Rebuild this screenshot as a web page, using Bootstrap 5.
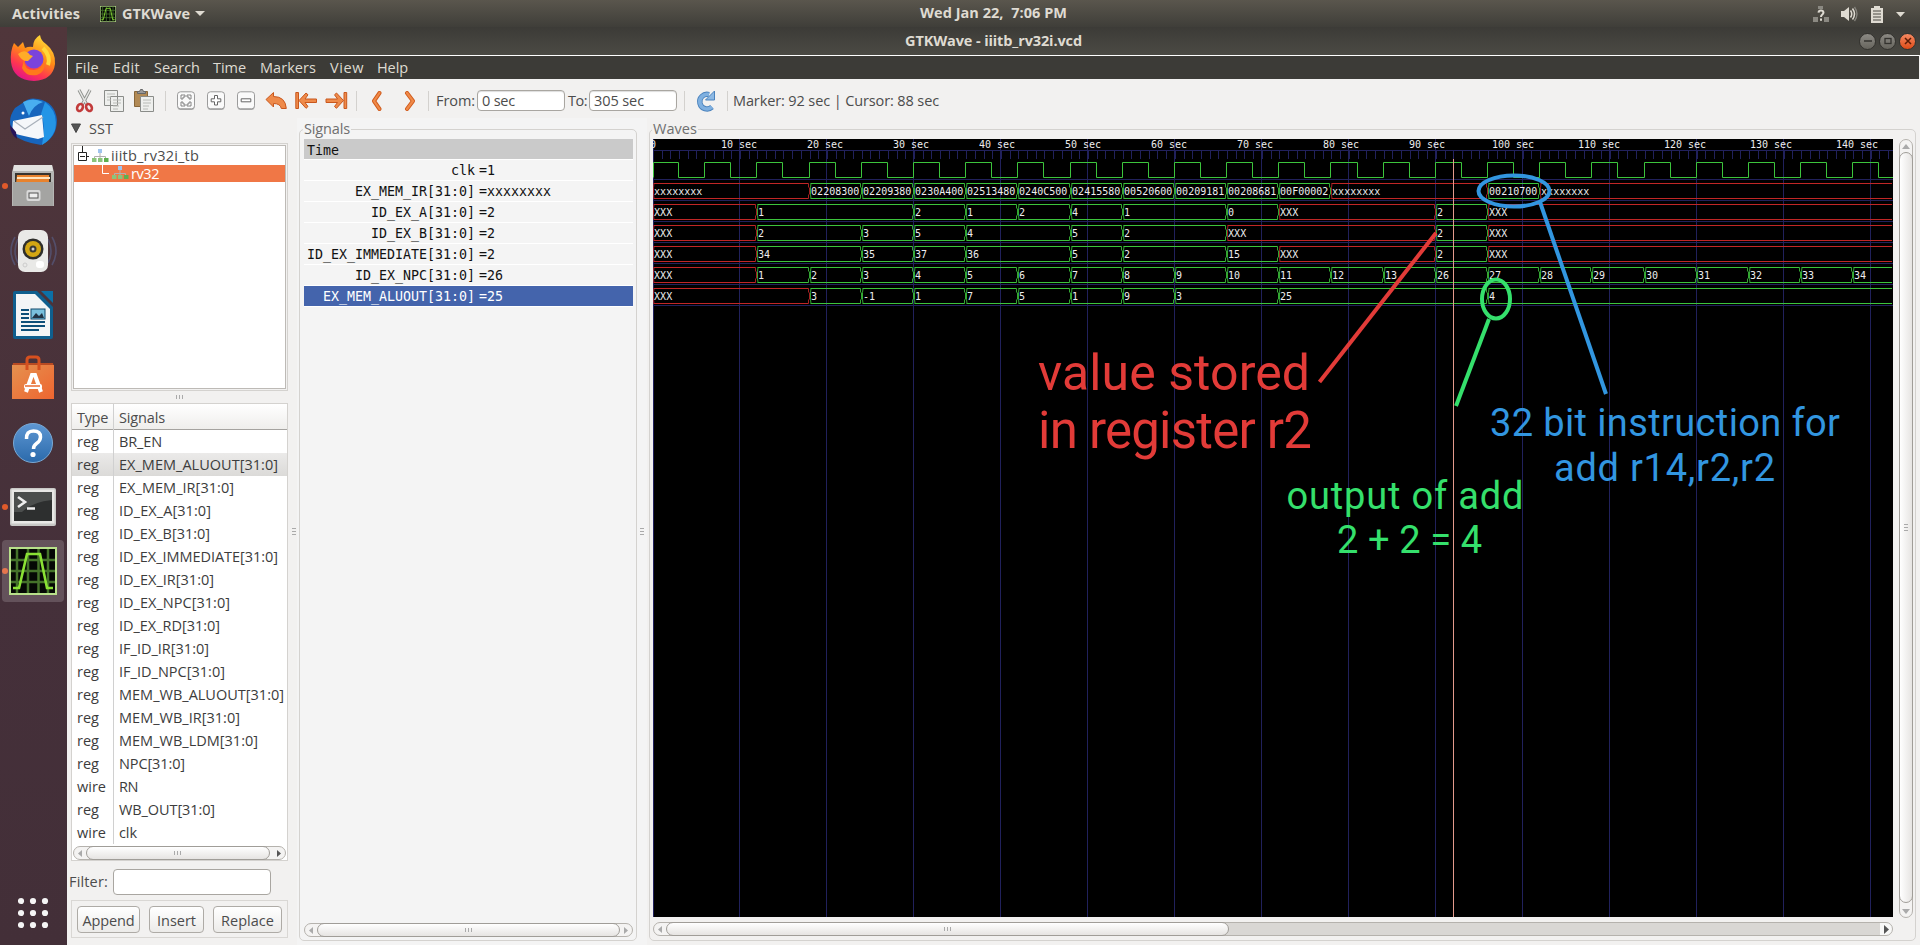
<!DOCTYPE html>
<html lang="en">
<head>
<meta charset="utf-8">
<title>GTKWave - iiitb_rv32i.vcd</title>
<link rel="stylesheet" href="https://cdn.jsdelivr.net/npm/bootstrap@5.3.0/dist/css/bootstrap.min.css">
<style>
body{width:1920px;height:945px;font:14.5px/20px "Open Sans","Noto Sans",sans-serif;color:#4c4c4c;background:#f2f1f0}
svg{display:block;flex:none}
.fit{white-space:pre;display:inline-block}
.topbar{height:27px;background:linear-gradient(#5a564d,#3f3e39);color:#dfdbd2;font-weight:700;padding:0 14px 0 12px}
.clock{left:920px;top:3px}
.dock{width:67px;background:linear-gradient(#50363b,#45303a 60%,#432f38)}
.dock .app{height:64.2px;display:flex;align-items:center;justify-content:center;position:relative;padding-right:1px}
.dock .app:first-child{margin-top:-1px}
.dock .running::before{content:"";position:absolute;left:2px;top:29px;width:6px;height:6px;border-radius:50%;background:#e05a2b}
.dock .active-app::after{content:"";position:absolute;left:2px;top:1px;width:62px;height:62px;border-radius:4px;background:rgba(255,255,255,.17);z-index:0}
.dock .app svg{position:relative;z-index:1}
.titlebar{height:28px;background:linear-gradient(#3c3b37,#4b4a44);border-bottom:0;color:#dfdbd2;font-weight:700}
.wm{width:17px;height:17px;border-radius:50%;background:linear-gradient(#8c8a84,#66645d);border:1px solid #33322e;display:flex;align-items:center;justify-content:center}
.wm.close-btn{background:linear-gradient(#f58a63,#df4b17)}
.menus{height:24px;background:#3c3b37;color:#dfdbd2;border-top:1px solid #fff;margin:0 1px 0 1px;display:grid;grid-template-columns:38px 41px 59px 47px 70px 47px 1fr;padding-left:7px;line-height:24px}
.tools{height:39px;padding:4px 0 0 8px;display:grid;align-items:center;grid-template-columns:29px 30px 31px 12px 30px 30px 28px 30px 30px 31px 15px 33px 24px 8px 41px 91px 21px 95px 11px 32px 6px 1fr}
.tools i{width:1px;height:20px;background:#d3d1ce}
.entry{height:21px;width:88px;background:#fff;border:1px solid #a9a6a1;border-radius:4px;padding-left:4px;line-height:20px;box-shadow:inset 0 1px 1px #ddd}
.left{width:230px;position:relative}
.left>.gripv{position:absolute;left:225px;top:410px}
.sst{height:25px;padding:5px 0 0 4px}
.sst .fit{margin:-4px 0 0 8px}
.tree{margin-left:4px;width:217px;height:248px;border:1px solid #d4d2cf;padding:1px}
.tree>div{border:1px solid #bdbab6;height:100%;background:#fff}
.node{height:19px;line-height:20px}
.node.sel{height:17px;line-height:17px;background:#f07746;color:#fff}
.siglist{margin-left:4px;width:217px;height:458px;border:1px solid #d4d2cf;background:#fff}
.lrow{display:grid;grid-template-columns:42px 1fr;height:23px;line-height:23px;color:#3c3c3c}
.lrow>span:first-child{border-right:1px solid #d0d0d0;padding-left:5px}
.lrow>span:last-child{padding-left:5px}
.lrow.head{height:26px;line-height:27px;background:linear-gradient(#fff,#efeeec);border-bottom:1px solid #a5a3a0;color:#4c4c4c}
.lrow.hl{background:linear-gradient(#ebeae9,#dbdad8)}
.filter{width:158px;height:26px;background:#fff;border:1px solid #a9a6a1;border-radius:4px}
.btns{margin-left:4px;width:217px;height:38px;border:1px solid #d9d7d4;padding:0 4px 0 5px}
.gbtn{height:27px;border:1px solid #aeaba6;border-radius:4px;background:linear-gradient(#fff,#ecebe9);text-align:center;line-height:27px;color:#4c4c4c}
.sb{height:14px;border:1px solid #b5b2ad;border-radius:7px;background:#f4f3f2;display:flex;align-items:stretch}
.thumb{border:1px solid #a09d98;border-radius:7px;background:linear-gradient(#fff,#e6e4e2);margin:-1px 0;display:flex;align-items:center;justify-content:center}
.grip{width:8px;height:4px;background:repeating-linear-gradient(90deg,#aaa 0 1px,transparent 1px 3px)}
.gripv{width:4px;height:8px;background:repeating-linear-gradient(#aaa 0 1px,transparent 1px 3px)}
.arr{width:12px;display:flex;align-items:center;justify-content:center}
.vsb{width:14px;height:779px;flex-direction:column}
.vsb .thumb{margin:0 -1px;background:linear-gradient(90deg,#fff,#e6e4e2)}
.vsb .arr{width:12px;height:12px}
.pane{border:1px solid #d4d2cf;border-radius:5px;position:relative;margin-top:11px;height:812px}
.pane>.cap{position:absolute;top:-11px;left:3px;padding:0 1px;color:#6f6f6f;line-height:20px}
.pane>.cap.wv{left:2px}
.values{font:13.3px/20px "DejaVu Sans Mono",monospace;color:#111}
.vrow{height:21.05px;border-bottom:1px solid #fff;display:grid;grid-template-columns:171px 1fr;column-gap:4px;line-height:21px}
.vrow>span:first-child{text-align:right}
.vrow.time{background:#cacaca;line-height:24px}.vrow.time>span:first-child{text-align:left;padding-left:3px}
.vrow.sel{background:#4464ac;color:#fff}
.mono{font:10px "DejaVu Sans Mono",monospace;fill:#eee}
.note{font-family:Roboto,sans-serif}
</style>
</head>
<body class="d-flex flex-column overflow-hidden m-0">
<header class="topbar d-flex align-items-center position-relative">
  <span class="fit" data-w="68">Activities</span>
  <svg style="margin-left:20px" width="16" height="16" viewBox="0 0 48 48"><use href="#wave"/></svg>
  <span class="fit" data-w="68" style="margin-left:6px">GTKWave</span>
  <svg class="ms-1" width="12" height="7"><path d="M1 1h10l-5 5z" fill="#dfdbd2"/></svg>
  <span class="fit clock position-absolute" data-w="147">Wed Jan 22,  7:06 PM</span>
  <svg class="ms-auto" width="94" height="20" viewBox="0 0 94 20" fill="#dfdbd2">
    <g fill="#8b8982"><rect x="6" y="2" width="5" height="3"/><rect x="1" y="13" width="5" height="5"/><rect x="12" y="13" width="5" height="5"/></g>
    <path d="M5.500 8.500q.3-3 3.500-3t3.500 3q0 1.800-1.800 2.900-.7.500-.7 1.600H8q0-2 1.500-3 .9-.7.900-1.400 0-1-1.400-1-1.300 0-1.500 1.200zM8 14.500h2v2.300H8z"/>
    <path d="M29 7h3l5-4v14l-5-4h-3z"/><path d="M38.500 6.500q2.500 3.500 0 7M40.500 4.500q4 5.500 0 11" fill="none" stroke="#dfdbd2" stroke-width="1.500"/><path d="M42.500 3q5 7 0 14" fill="none" stroke="#85837c" stroke-width="1.300"/>
    <path d="M62 2h6v2h3v15H59V4h3z"/><path d="M61 7h8M61 10h8M61 13h8M61 16h8" stroke="#4c4a44"/><path d="M84 8h9l-4.500 5z"/>
  </svg>
</header>
<div class="d-flex flex-grow-1">
  <nav class="dock d-flex flex-column">
    <div class="app"><svg width="48" height="48" viewBox="0 0 48 48"><defs><linearGradient id="ff" x1=".8" y1="0" x2=".3" y2="1"><stop offset="0" stop-color="#ffe63e"/><stop offset=".45" stop-color="#ff8a16"/><stop offset=".75" stop-color="#ff3750"/><stop offset="1" stop-color="#e0138a"/></linearGradient></defs><path d="M5 9l4 4 5-5 2 6q4-2 8-1 0-8 7-12 1 6 6 9 10 8 9 20-2 16-21 17Q4 46 2 28 1 17 5 9z" fill="url(#ff)"/><circle cx="25" cy="25" r="9.500" fill="#7a43dc"/><path d="M15 26q0 10 10 10 8-1 10-8 2 10-7 13-11 2-15-7z" fill="#ff7a1a"/><path d="M9 20q7-6 12 1l3 1-5 5q-6 1-10-7z" fill="#ffac28"/><path d="M34 14q8 8 5 17" fill="none" stroke="#ffd83a" stroke-width="4"/></svg></div>
    <div class="app"><svg width="48" height="48" viewBox="0 0 48 48"><path d="M15 4Q20-1 29 1q17 3 19 21 0 18-16 25Q12 44 4 36-3 22 6 10z" fill="#1765bd"/><path d="M14 4q10-5 20 0-10 3-14 14z" fill="#49aef0"/><path d="M36 4q14 10 10 28-4 10-13 15 4-21-1-31z" fill="#2495e6"/><path d="M4 23l29-6 2 22-6 2Q14 38 3 35z" fill="#f5f7fa"/><path d="M5 23l11 8 18-12" fill="none" stroke="#a8b0ba" stroke-width="1.200"/><path d="M1 27q0 9 7 14l-1-7z" fill="#26145a"/><circle cx="14" cy="15" r="1.500" fill="#fff"/></svg></div>
    <div class="app running"><svg width="48" height="48" viewBox="0 0 48 48"><path d="M5 3h38l2 7v34H3V10z" fill="#b6b6b4"/><path d="M5 3h38l1 6H4z" fill="#e2e2e0"/><path d="M6 11h36v11H6z" fill="#38342f"/><path d="M8 13h32v9H7z" fill="#e8822d"/><path d="M8 15h33v2H8z" fill="#ffe3bd"/><path d="M4 20h40v24H4z" fill="#a4a4a2"/><rect x="17.500" y="28" width="14" height="11" rx="2" fill="#d9d9d9"/><rect x="20" y="31" width="9" height="5" fill="#eee" stroke="#555"/></svg></div>
    <div class="app"><svg width="48" height="48" viewBox="0 0 48 48"><g fill="none" stroke="#59608a" stroke-opacity=".6" stroke-width="1.600"><path d="M6 10Q-2 24 6 38M43 10q8 14 0 28M9 12q-6 12 0 24M39 12q6 12 0 24"/></g><rect x="9" y="3" width="30" height="42" rx="7" fill="#e9e9e7"/><circle cx="24" cy="22" r="10.500" fill="#2e2e2b"/><circle cx="24" cy="22" r="8" fill="#d3a613"/><circle cx="24" cy="22" r="3.500" fill="#3b3a34"/><circle cx="24" cy="22" r="1.500" fill="#cfcfcf"/><rect x="27" y="34" width="8" height="7" rx="3" fill="#fff"/><circle cx="16" cy="38" r="2" fill="none" stroke="#ccc"/></svg></div>
    <div class="app"><svg width="48" height="48" viewBox="0 0 48 48"><path d="M4 2q0-2 2-2h22l16 16v30q0 2-2 2H6q-2 0-2-2z" fill="#0f5f8e"/><path d="M32 0h12v12z" fill="#0c70a6"/><path d="M7 3h19l15 15v27H7z" fill="#f3f5f6"/><g stroke="#0d4f79" stroke-width="2"><path d="M12 19h8M12 23h8M12 27h8M12 31h24M12 35h24M12 39h18"/></g><rect x="22" y="18" width="14" height="10" fill="#7ac0dd" stroke="#124b6c"/><path d="M23 27l4-5 3 3 3-3 2 5z" fill="#234"/></svg></div>
    <div class="app"><svg width="48" height="48" viewBox="0 0 48 48"><defs><linearGradient id="sw" y2="1"><stop stop-color="#e5914f"/><stop offset="1" stop-color="#ee6530"/></linearGradient></defs><path d="M4 8h40l1 4H3z" fill="#b84a22"/><path d="M3 10h42v34H3z" fill="url(#sw)"/><path d="M18 15V5q0-3 3-3h6q3 0 3 3v10" fill="none" stroke="#d6501f" stroke-width="3"/><path d="M17 37l6-17h3l6 17" fill="none" stroke="#fff" stroke-width="4"/><rect x="15" y="29" width="18" height="5" rx="2" fill="#fff"/><path d="M16 31h15" stroke="#e96a32" stroke-width="1.500"/></svg></div>
    <div class="app"><svg width="48" height="48" viewBox="0 0 48 48"><defs><linearGradient id="hp" x2="0" y2="1"><stop stop-color="#5e97d3"/><stop offset="1" stop-color="#2b6aab"/></linearGradient></defs><circle cx="24" cy="24" r="19.500" fill="url(#hp)" stroke="#7aa9d4"/><path d="M17.500 20q-.5-8 7-8 7 0 7 6 0 4-4 6.500-3 2-3 5.500" fill="none" stroke="#fff" stroke-width="3.500"/><circle cx="24" cy="35.500" r="2.600" fill="#fff"/></svg></div>
    <div class="app running"><svg width="48" height="48" viewBox="0 0 48 48"><rect x="1" y="5" width="46" height="38" rx="2" fill="#c8c8c6"/><rect x="2.500" y="6.500" width="43" height="34" fill="#e8e8e6"/><rect x="5" y="9" width="38" height="29" fill="#2d2f2f"/><path d="M5 9h38v8q-20 2-30 12H5z" fill="#4b4e4d"/><path d="M9 14l7 5-7 5" fill="none" stroke="#eee" stroke-width="2.600"/><path d="M18 25.500h8" stroke="#eee" stroke-width="2.500"/></svg></div>
    <div class="app running active-app" style="margin-top:-1px"><svg width="48" height="48" viewBox="0 0 48 48"><g id="wave"><rect width="48" height="48" fill="#b8e08a"/><rect x="2" y="2" width="44" height="44" fill="#050805"/><path d="M8 2v44M19 2v44M29.500 2v44M39 2v44M2 13h44M2 24h44M2 35h44" stroke="#44722a" stroke-width="2.500"/><path d="M4 41h6L18 7h13l7 34h6" fill="none" stroke="#8ae234" stroke-width="2.600"/></g></svg></div>
    <div class="mt-auto" style="margin-bottom:16px;padding-left:18px"><svg width="32" height="32" fill="#f5f5f5"><g id="d"><circle cx="3" cy="4" r="3.100"/><circle cx="15" cy="4" r="3.100"/><circle cx="27" cy="4" r="3.100"/></g><use href="#d" y="12"/><use href="#d" y="24"/></svg></div>
  </nav>
  <main class="d-flex flex-column flex-grow-1">
    <div class="titlebar d-flex align-items-center position-relative">
      <span class="fit position-absolute" style="left:838px" data-w="177">GTKWave - iiitb_rv32i.vcd</span>
      <div class="ms-auto d-flex" style="gap:3px;margin-right:4px">
        <span class="wm"><svg width="8" height="8"><path d="M0 4h8" stroke="#33322e" stroke-width="1.500"/></svg></span>
        <span class="wm"><svg width="8" height="8"><rect x="1" y="1.500" width="6" height="5" fill="none" stroke="#33322e" stroke-width="1.300"/></svg></span>
        <span class="wm close-btn"><svg width="8" height="8"><path d="M1 1l6 6M7 1L1 7" stroke="#5a1c06" stroke-width="1.500"/></svg></span>
      </div>
    </div>
    <div class="menus">
      <span><span class="fit" data-w="24">File</span></span><span><span class="fit" data-w="27">Edit</span></span><span><span class="fit" data-w="46">Search</span></span><span><span class="fit" data-w="33">Time</span></span><span><span class="fit" data-w="56">Markers</span></span><span><span class="fit" data-w="34">View</span></span><span><span class="fit" data-w="31">Help</span></span>
    </div>
    <div class="tools">
      <svg width="20" height="24" viewBox="0 0 20 24"><path d="M4 1l8 15M15 1L7 16" stroke="#8d8f8c" stroke-width="3.200"/><path d="M4 1l8 15M15 1L7 16" stroke="#e6e7e5" stroke-width="1.500"/><ellipse cx="5" cy="18.500" rx="2.700" ry="3.700" transform="rotate(25 5 18.500)" fill="none" stroke="#c23b3b" stroke-width="2.600"/><ellipse cx="14" cy="18.500" rx="2.700" ry="3.700" transform="rotate(-25 14 18.500)" fill="none" stroke="#c23b3b" stroke-width="2.600"/></svg>
      <svg width="21" height="24" viewBox="0 0 21 24"><g stroke="#8a8c89" fill="#eeefed"><path d="M.5 1.500h13v15H.5zM6.500 7.500h13v15h-13z"/><path d="M3 5h8M3 8h4M3 11h4M9 11h8M9 14h8M9 17h6M9 20h5" stroke="#b8bab6"/></g></svg>
      <svg width="21" height="24" viewBox="0 0 21 24"><path d="M.5 2.500h13v15H.5z" fill="#b28a55" stroke="#87663a"/><path d="M3.500 4.500v-2h2l1-2h2l1 2h2v2z" fill="#999" stroke="#666"/><g stroke="#8a8c89" fill="#eeefed"><path d="M6.500 7.500h13v15h-13z"/><path d="M9 11h8M9 14h8M9 17h6M9 20h5" stroke="#b8bab6"/></g></svg>
      <i></i>
      <svg width="18" height="20" viewBox="0 0 18 20"><g id="kb"><rect x=".5" y="2" width="17" height="17" rx="3" fill="#aaa"/><rect x=".5" y=".8" width="17" height="17" rx="3" fill="#fafafa" stroke="#9b9b9b"/></g><path d="M4 8V4h4v2H6v2zM14 8V4h-4v2h2v2zM4 11v4h4v-2H6v-2zM14 11v4h-4v-2h2v-2z" fill="#fff" stroke="#777" stroke-width=".9"/></svg>
      <svg width="18" height="20" viewBox="0 0 18 20"><use href="#kb"/><path d="M7.500 4.500h3v3.300h3.300v3h-3.300V14h-3v-3.200H4.200v-3h3.300z" fill="#fff" stroke="#666"/></svg>
      <svg width="18" height="20" viewBox="0 0 18 20"><use href="#kb"/><path d="M4.200 7.800h9.600v3H4.200z" fill="#fff" stroke="#666"/></svg>
      <svg width="23" height="20" viewBox="0 0 23 20"><path d="M1 8.500L8.500 1.500v4q12 0 12.800 12h-5q-1-5-7.800-5V16z" fill="#ee8a4a" stroke="#c9571d"/></svg>
      <svg width="23" height="20" viewBox="0 0 23 20"><g id="la"><path d="M.8 1.500h2.700v16H.8z" fill="#ee8a4a" stroke="#c9571d"/><path d="M4 9.500L11 2l2 1.800L10 8h11.500v3.500H10l3 4-2 1.800z" fill="#ee8a4a" stroke="#c9571d"/></g></svg>
      <svg width="23" height="20" viewBox="0 0 23 20"><use href="#la" transform="matrix(-1 0 0 1 22.500 0)"/></svg>
      <i></i>
      <svg width="12" height="20" viewBox="0 0 12 20"><path d="M8.500 2L3 10l5.500 8" fill="none" stroke="#cf5a1c" stroke-width="4" stroke-linecap="round" stroke-linejoin="round"/><path d="M8.500 2L3 10l5.500 8" fill="none" stroke="#f08a48" stroke-width="2.200" stroke-linecap="round"/></svg>
      <svg width="12" height="20" viewBox="0 0 12 20"><path d="M3 2l6 8-6 8" fill="none" stroke="#cf5a1c" stroke-width="4" stroke-linecap="round" stroke-linejoin="round"/><path d="M3 2l6 8-6 8" fill="none" stroke="#f08a48" stroke-width="2.200" stroke-linecap="round"/></svg>
      <i></i>
      <span><span class="fit" data-w="39">From:</span></span><div class="entry"><span class="fit" data-w="33">0 sec</span></div>
      <span><span class="fit" data-w="19">To:</span></span><div class="entry"><span class="fit" data-w="50">305 sec</span></div>
      <i></i>
      <svg width="22" height="24" viewBox="0 0 22 24"><path d="M17 18A7.300 7.300 0 1 1 14 5.600" fill="none" stroke="#4b83bd" stroke-width="5.400"/><path d="M17 18A7.300 7.300 0 1 1 14 5.600" fill="none" stroke="#7fb0e0" stroke-width="3.600"/><path d="M19.500 2v9h-9z" fill="#8db9e4" stroke="#4b83bd"/></svg>
      <i></i>
      <span><span class="fit" data-w="206">Marker: 92 sec | Cursor: 88 sec</span></span>
    </div>
    <div class="d-flex flex-grow-1">
      <section class="left">
        <div class="sst d-flex align-items-start"><svg width="10" height="12"><path d="M.5 1h9l-4.500 8.500z" fill="#555" stroke="#444"/></svg><span class="fit" data-w="24">SST</span></div>
        <div class="tree"><div>
          <div class="node d-flex"><svg width="36" height="19"><path d="M8.500 0v6M13 10.500h2" stroke="#222"/><path d="M4.500 6.500h8v8h-8zM6 10.500h5" fill="#fff" stroke="#222"/><g id="hi" transform="translate(18 3)"><path d="M8 3v4M2.500 11V7.500h11V11M8 7v4" stroke="#b0b0b0" fill="none"/><rect x="6" y="0" width="4" height="4" fill="#9fc4ee"/><rect x="0" y="9" width="4.500" height="4" fill="#8bc47a"/><rect x="6" y="9" width="4.500" height="4" fill="#8bc47a"/><rect x="12" y="9" width="4.500" height="4" fill="#5fb04f"/></g></svg><span class="fit" style="margin-left:1px" data-w="88">iiitb_rv32i_tb</span></div>
          <div class="node sel d-flex"><svg width="56" height="17"><path d="M28.500 0v8.500H35" stroke="#fff" fill="none"/><use href="#hi" x="20" y="-2"/></svg><span class="fit" style="margin-left:1px" data-w="28">rv32</span></div>
        </div></div>
        <div class="d-flex" style="height:12px;padding:4px 0 0 109px"><span class="grip"></span></div>
        <div class="siglist"><div class="lrow head"><span><span class="fit" data-w="31">Type</span></span><span><span class="fit" data-w="46">Signals</span></span></div><div id="siglist"></div>
          <div class="sb" style="margin:2px 0 0 1px;width:213px"><span class="arr"><svg width="4" height="7"><path d="M4 0v7L0 3.500z" fill="#aaa"/></svg></span><div class="thumb" style="width:184px"><span class="grip"></span></div><span class="arr ms-auto"><svg width="4" height="7"><path d="M0 0v7l4-3.500z" fill="#555"/></svg></span></div>
        </div>
        <div class="d-flex align-items-center" style="padding:8px 0 5px 2px"><span style="width:44px"><span class="fit" data-w="39">Filter:</span></span><div class="filter"></div></div>
        <div class="btns d-flex align-items-center"><div class="gbtn" style="width:63px"><span class="fit" data-w="52">Append</span></div><div class="gbtn" style="width:55px;margin-left:9px"><span class="fit" data-w="39">Insert</span></div><div class="gbtn" style="width:69px;margin-left:9px"><span class="fit" data-w="53">Replace</span></div></div>
        <div class="gripv"></div>
      </section>
      <section class="d-flex" style="width:350px;background:#f4f4f4">
        <div class="pane" style="width:338px;margin-left:2px;padding:9px 3px 0 4px"><span class="cap" style="background:#f4f4f4"><span class="fit" data-w="46">Signals</span></span>
          <div class="values" id="values"></div>
          <div class="sb" style="margin-top:616px;width:329px"><span class="arr"><svg width="4" height="7"><path d="M4 0v7L0 3.500z" fill="#aaa"/></svg></span><div class="thumb" style="width:303px"><span class="grip"></span></div><span class="arr ms-auto"><svg width="4" height="7"><path d="M0 0v7l4-3.500z" fill="#aaa"/></svg></span></div>
        </div>
        <div class="align-self-center" style="margin-left:3px"><div class="gripv"></div></div>
      </section>
      <section>
        <div class="pane" style="width:1267px;margin-left:2px;padding:9px 3px 0"><span class="cap wv" style="background:#f2f1f0"><span class="fit" data-w="44">Waves</span></span>
          <div class="d-flex">
            <div><svg id="waves" width="1240" height="778" viewBox="653 139 1240 778" style="background:#000"></svg>
              <div class="sb" style="margin-top:5px;width:1240px;background:linear-gradient(90deg,#f4f3f2 0 560px,#d9d7d4 560px 1226px,#f8f8f7 1226px)"><span class="arr"><svg width="4" height="7"><path d="M4 0v7L0 3.500z" fill="#aaa"/></svg></span><div class="thumb" style="width:563px"><span class="grip"></span></div><span class="arr ms-auto"><svg width="5" height="9"><path d="M0 0v9l5-4.500z" fill="#555"/></svg></span></div></div>
            <div class="sb vsb" style="margin-left:6px"><span class="arr"><svg width="8" height="5"><path d="M0 5h8L4 0z" fill="#aaa"/></svg></span><div class="thumb" style="height:751px"><span class="gripv"></span></div><span class="arr mt-auto"><svg width="8" height="5"><path d="M0 0h8L4 5z" fill="#aaa"/></svg></span></div>
          </div>
        </div>
      </section>
    </div>
  </main>
</div>
<script src="https://cdn.jsdelivr.net/npm/bootstrap@5.3.0/dist/js/bootstrap.bundle.min.js"></script>
<script>
// signal list: type, name, text width
const sigs=[['reg','BR_EN',43],['reg','EX_MEM_ALUOUT[31:0]',159],['reg','EX_MEM_IR[31:0]',115],['reg','ID_EX_A[31:0]',92],['reg','ID_EX_B[31:0]',91],['reg','ID_EX_IMMEDIATE[31:0]',159],['reg','ID_EX_IR[31:0]',95],['reg','ID_EX_NPC[31:0]',111],['reg','ID_EX_RD[31:0]',101],['reg','IF_ID_IR[31:0]',90],['reg','IF_ID_NPC[31:0]',106],['reg','MEM_WB_ALUOUT[31:0]',165],['reg','MEM_WB_IR[31:0]',121],['reg','MEM_WB_LDM[31:0]',139],['reg','NPC[31:0]',66],['wire','RN',19],['reg','WB_OUT[31:0]',96],['wire','clk',18]];
document.getElementById('siglist').innerHTML=sigs.map((s,i)=>`<div class="lrow${i==1?' hl':''}"><span><span class="fit" data-w="${s[0]=='reg'?22:29}">${s[0]}</span></span><span><span class="fit" data-w="${s[2]}">${s[1]}</span></span></div>`).join('');
const vals=[['Time',''],['clk','=1'],['EX_MEM_IR[31:0]','=xxxxxxxx'],['ID_EX_A[31:0]','=2'],['ID_EX_B[31:0]','=2'],['ID_EX_IMMEDIATE[31:0]','=2'],['ID_EX_NPC[31:0]','=26'],['EX_MEM_ALUOUT[31:0]','=25']];
document.getElementById('values').innerHTML=vals.map((v,i)=>`<div class="vrow${i==0?' time':i==7?' sel':''}"><span>${v[0]}</span><span>${v[1]}</span></div>`).join('');

// waveform: one second is 8.698 px, origin at x=653
const S=8.698,X=t=>653+S*t,R=Math.round;
let g='';
const line=(x1,y1,x2,y2,c,w=1)=>`<path d="M${x1} ${y1}L${x2} ${y2}" stroke="${c}" stroke-width="${w}"/>`;
const blue='#21215c',gr='#3cc43c',rd='#c02626';
g+=line(653.5,139,653.5,917,blue);
for(let k=1;k<=14;k++)g+=line(R(X(10*k)-.5)+.5,139,R(X(10*k)-.5)+.5,917,blue);
g+=line(653,150.5,1893,150.5,blue);
for(let k=1;k<143;k++)g+=line(R(X(k))+.5,151,R(X(k))+.5,159,blue);
for(let r=0;r<7;r++)g+=line(653,179.5+21*r,1893,179.5+21*r,blue);
g+=`<text class="mono" x="650" y="148">0</text>`;
for(let k=1;k<=14;k++)g+=`<text class="mono" text-anchor="middle" x="${739+86*(k-1)}" y="148">${k*10} sec</text>`;
let d='M653.5 177.5V162.500';
for(let t=0;t<142;t+=3){const e=Math.min(1893,R(X(t+3))-.5);d+=`H${e}`;if(e<1893)d+=(t/3)%2?'V162.500':'V177.500'}
g+=`<path d="${d}" fill="none" stroke="${gr}"/>`;
const X8='xxxxxxxx',X3='XXX';
const bus=[
 [0,X8,18,'02208300',24,'02209380',30,'0230A400',36,'02513480',42,'0240C500',48,'02415580',54,'00520600',60,'00209181',66,'00208681',72,'00F00002',78,X8,96,'00210700',102,X8],
 [0,X3,12,1,30,2,36,1,42,2,48,4,54,1,66,0,72,X3,90,2,96,X3],
 [0,X3,12,2,24,3,30,5,36,4,48,5,54,2,66,X3,90,2,96,X3],
 [0,X3,12,34,24,35,30,37,36,36,48,5,54,2,66,15,72,X3,90,2,96,X3],
 [0,X3,12,1,18,2,24,3,30,4,36,5,42,6,48,7,54,8,60,9,66,10,72,11,78,12,84,13,90,26,96,27,102,28,108,29,114,30,120,31,126,32,132,33,138,34],
 [0,X3,18,3,24,-1,30,1,36,7,42,5,48,1,54,9,60,3,72,25,96,4]];
bus.forEach((b,r)=>{const y=183.5+21*r,z=y+15;
 for(let i=0;i<b.length;i+=2){const bad=/x/i.test(b[i+1]),c=bad?rd:gr,last=i+2>=b.length;
  const a=R(X(b[i]))+(i?.5:.5),e=last?1892:R(X(b[i+2]))-1.5;
  g+=`<path d="M${a} ${y}H${e}M${a} ${z}H${e}" stroke="${c}"/>`;
  g+=`<path d="M${a+.5} ${y}L${a} ${y+4}V${z-4}L${a+.5} ${z}" fill="none" stroke="${c}" stroke-opacity=".85"/>`;
  if(!last)g+=`<path d="M${e} ${y}V${y+4}M${e} ${z-4}V${z}M${e+1} ${y+4}V${z-4}" fill="none" stroke="${c}" stroke-opacity=".85"/>`;
  g+=`<text class="mono" x="${a+.6}" y="${y+11.3}">${b[i+1]}</text>`;}});
g+=line(1453.5,159,1453.5,917,'#e39a8c');
// annotations over the waveform
const B='#3296e0',G='#35e06c',D='#e23b38';
g+=`<g fill="none" stroke-width="4"><ellipse cx="1514" cy="191" rx="35.500" ry="15.500" stroke="${B}"/><path d="M1540 202L1606 394" stroke="${B}"/><ellipse cx="1496" cy="299" rx="14" ry="19.500" stroke="${G}"/><path d="M1489 319L1456 406" stroke="${G}"/><path d="M1436 233L1319.500 382" stroke="${D}"/></g>`;
const note=(t,x,y,w,s,c)=>`<text class="note" x="${x}" y="${y}" font-size="${s}" textLength="${w}" fill="${c}">${t}</text>`;
g+=note('value stored',1038,389.5,272,50,D)+note('in register r2',1038,448,274,51,D)+note('output of add',1286.5,508.5,237,38,G)+note('2 + 2 = 4',1337,552.5,145,38,G)+note('32 bit instruction for',1490,436,350,38,B)+note('add r14,r2,r2',1554,481,221,38,B);
document.getElementById('waves').innerHTML=g;

// letter-spacing that brings each label to its measured width
document.querySelectorAll('.fit').forEach(e=>{const n=e.textContent.length;e.style.letterSpacing=((+e.dataset.w-e.getBoundingClientRect().width)/n).toFixed(3)+'px'});
</script>
</body>
</html>
